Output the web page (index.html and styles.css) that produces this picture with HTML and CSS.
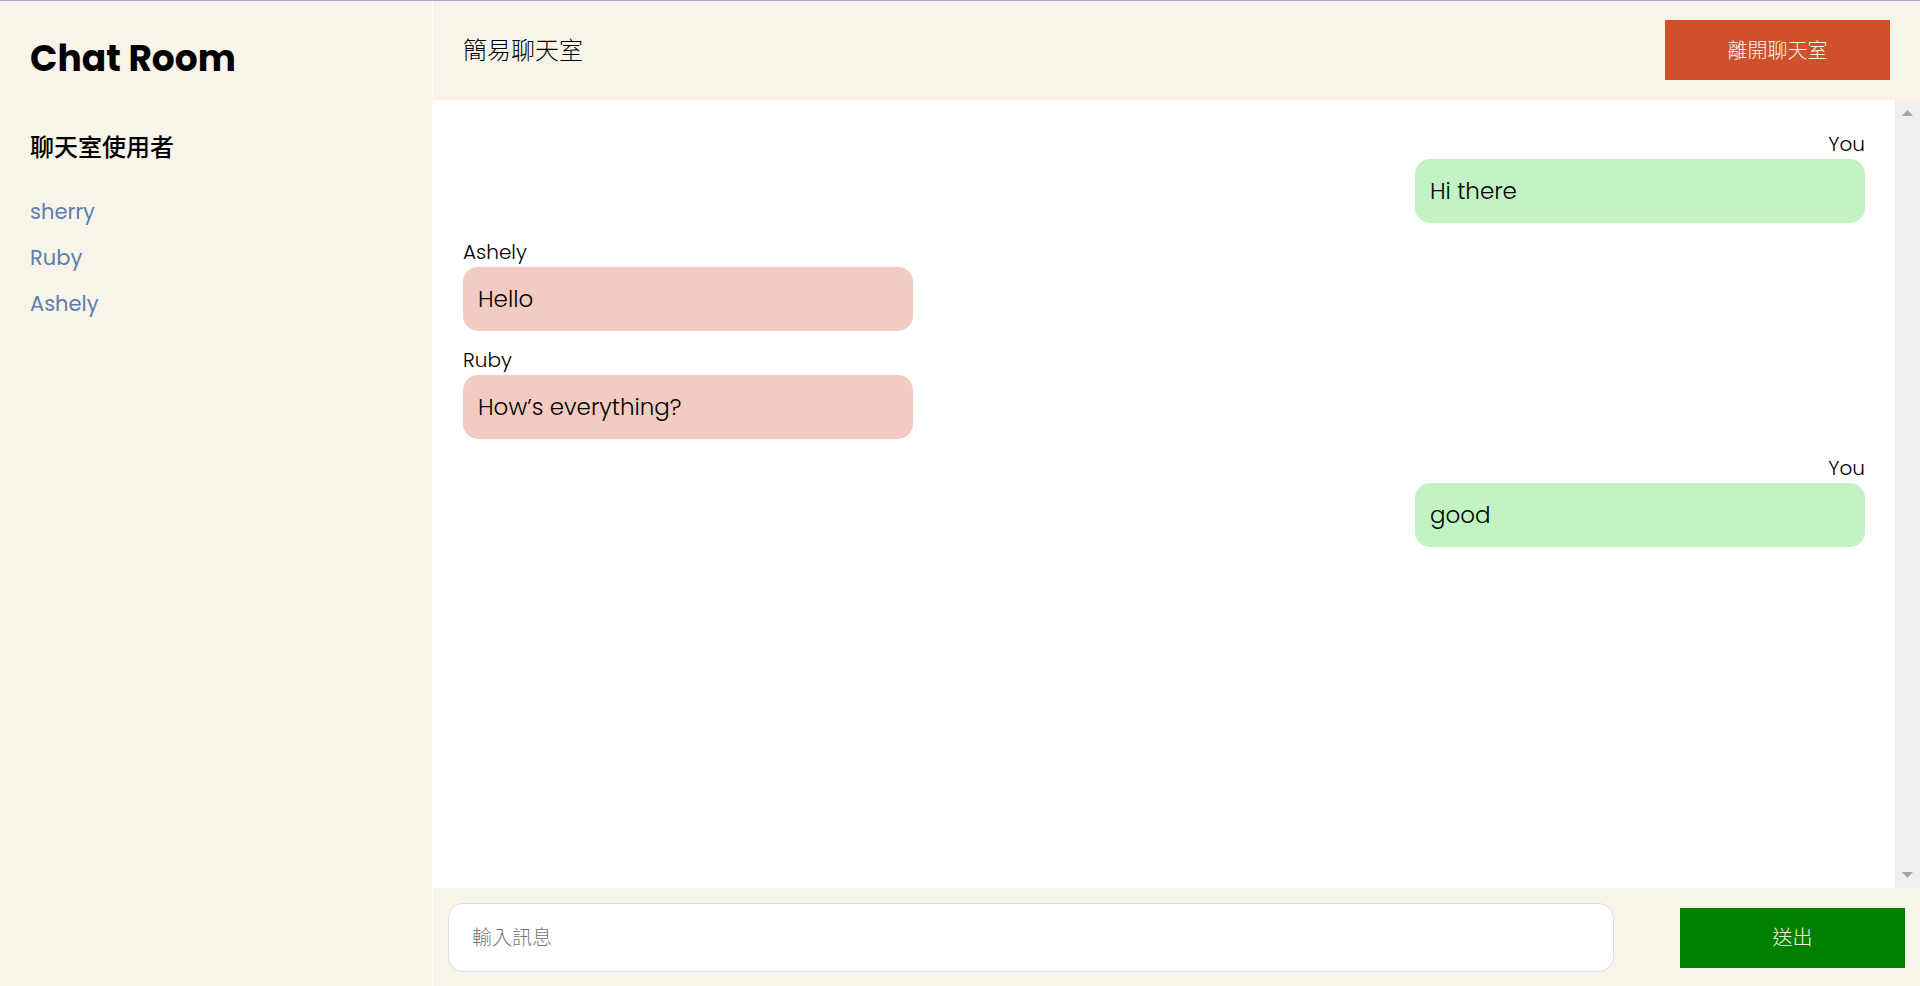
FILE: index.html
```html
<!DOCTYPE html>
<html lang="zh-Hant">
<head>
<meta charset="utf-8">
<meta name="viewport" content="width=device-width, initial-scale=1">
<title>Chat Room</title>
<link rel="stylesheet" href="styles.css">
</head>
<body>
<div class="app">
  <aside class="sidebar">
    <h1 class="brand">Chat Room</h1>
    <h2 class="users-title">聊天室使用者</h2>
    <ul class="users">
      <li>sherry</li>
      <li>Ruby</li>
      <li>Ashely</li>
    </ul>
  </aside>
  <main class="room">
    <header class="room-header">
      <p class="room-name">簡易聊天室</p>
      <button class="btn btn-leave" type="button">離開聊天室</button>
    </header>
    <div class="room-body">
      <section class="messages">
        <article class="message mine">
          <p class="author">You</p>
          <p class="bubble">Hi there</p>
        </article>
        <article class="message">
          <p class="author">Ashely</p>
          <p class="bubble">Hello</p>
        </article>
        <article class="message">
          <p class="author">Ruby</p>
          <p class="bubble">How’s everything?</p>
        </article>
        <article class="message mine">
          <p class="author">You</p>
          <p class="bubble">good</p>
        </article>
      </section>
      <div class="scrollbar" aria-hidden="true">
        <svg width="11" height="6" viewBox="0 0 11 6"><path d="M5.5 0 11 6H0z"/></svg>
        <svg width="11" height="6" viewBox="0 0 11 6"><path d="M0 0h11L5.5 6z"/></svg>
      </div>
    </div>
    <form class="composer">
      <input class="composer-input" type="text" placeholder="輸入訊息" aria-label="輸入訊息">
      <button class="btn btn-send" type="button">送出</button>
    </form>
  </main>
</div>
</body>
</html>
```
FILE: styles.css
```css
* {
  box-sizing: border-box;
  margin: 0;
  padding: 0;
}

body {
  font-family: Poppins, Inter, "Noto Sans CJK TC", sans-serif;
  color: #000;
  background: #fff;
}

.app {
  display: flex;
  min-height: 100vh;
  border-top: 1px solid #a0acc8;
}

.sidebar {
  flex: 0 0 433px;
  padding: 30px;
  background: #f9f4e9;
  border-right: 1px solid #fefdfb;
}

.brand {
  font-size: 36px;
  line-height: 56px;
  font-weight: 700;
}

.users-title {
  margin-top: 43px;
  font-size: 24px;
  line-height: 36px;
  font-weight: 500;
}

.users {
  margin-top: 23px;
  list-style: none;
  font-size: 21px;
  line-height: 46px;
  color: #5b7fae;
}

.room {
  flex: 1;
  min-width: 0;
  display: flex;
  flex-direction: column;
}

.room-header {
  display: flex;
  align-items: center;
  justify-content: space-between;
  padding: 19px 30px 20px;
  background: #f9f4e9;
}

.room-name {
  padding-bottom: 2px;
  font-size: 24px;
  font-weight: 300;
}

.btn {
  width: 225px;
  height: 60px;
  border: 0;
  font-family: inherit;
  font-size: 20px;
  font-weight: 300;
  color: #f9f4e9;
  cursor: pointer;
}

.btn-leave {
  background: #d0502b;
}

.btn-send {
  background: #008000;
}

.room-body {
  flex: 1;
  display: flex;
}

.messages {
  flex: 1;
  display: flex;
  flex-direction: column;
  gap: 14px;
  padding: 29px 30px;
}

.message {
  width: 450px;
}

.mine {
  align-self: flex-end;
}

.author {
  font-size: 20px;
  line-height: 30px;
  font-weight: 300;
}

.mine .author {
  text-align: right;
}

.bubble {
  padding: 15px;
  border-radius: 15px;
  font-size: 23px;
  line-height: 34px;
  font-weight: 300;
  background: #f4cbc2;
}

.mine .bubble {
  background: #c2f3c2;
}

.scrollbar {
  flex: 0 0 25px;
  display: flex;
  flex-direction: column;
  justify-content: space-between;
  align-items: center;
  padding: 10px 0;
  background: #f0f0f0;
  fill: #a3a3a3;
}

.composer {
  display: flex;
  align-items: center;
  justify-content: space-between;
  padding: 15px 15px 14px;
  background: #f9f4e9;
}

.composer-input {
  width: 80%;
  height: 69px;
  padding: 0 23px;
  border: 1px solid #dedede;
  border-radius: 15px;
  font-family: inherit;
  font-size: 20px;
  font-weight: 300;
  background: #fff;
}

.composer-input::placeholder {
  color: #757575;
}
```
